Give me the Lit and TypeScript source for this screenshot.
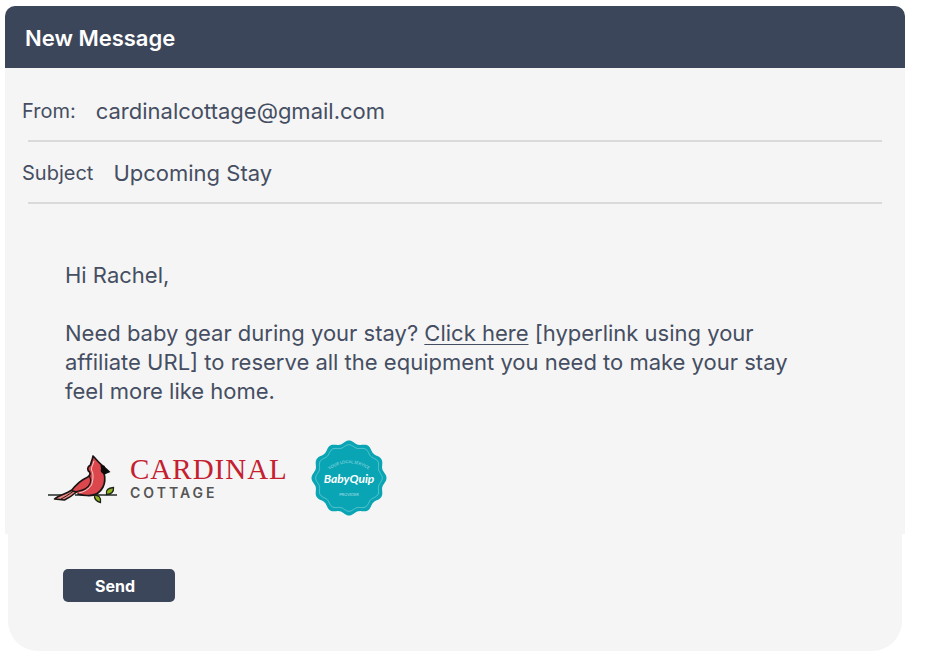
import { LitElement, html, css, svg } from "lit";
import { customElement, state } from "lit/decorators.js";

/* Closed scalloped outline: radius swings between crest and trough. */
function scallop(cx: number, cy: number, radius: number, swing: number, lobes: number): string {
  const steps = 240;
  const points: string[] = [];
  for (let i = 0; i < steps; i++) {
    const a = (i / steps) * Math.PI * 2;
    const r = radius + swing * Math.cos(lobes * a);
    points.push(`${(cx + r * Math.sin(a)).toFixed(2)} ${(cy - r * Math.cos(a)).toFixed(2)}`);
  }
  return `M${points.join("L")}Z`;
}

@customElement("cardinal-logo")
export class CardinalLogo extends LitElement {
  static styles = css`
    :host { display: flex; align-items: center; gap: 12px; }
    .bird { display: block; width: 70px; height: 52px; }
    .name {
      font: 29px/30px "Liberation Serif", serif;
      letter-spacing: 1px;
      color: #c4202f;
    }
    .kind {
      font: 600 14px/18px "Inter", sans-serif;
      letter-spacing: 3px;
      color: #555;
    }
  `;

  render() {
    return html`
      <svg class="bird" viewBox="0 0 70 52" role="img" aria-label="Cardinal on a branch">
        ${svg`
          <path d="M0 43H18M27 43H69" stroke="#222b29" stroke-width="1.3" fill="none"/>
          <path d="M45 4C44.500 8 43 10 42.500 13C39 15 39 18 41.500 20C43 22 41 25 38 26C31 29 27 34 23 39L30 41.500C33 43 40 44 45 43C53 41 57 35 56.500 28C56.500 25 56 23 56 21L61.500 19.500L56 14.500C52 12.500 49 8 45 4Z"
            fill="#dc464d"/>
          <path d="M45 4C44.500 8 43 10 42.500 13C39 15 39 18 41.500 20C43 22 41 25 38 26C31 29 27 34 23 39M45 4C49 8 52 12.500 56 14.500M56 21C57 25 57.500 30 55 35C52 41 46 44 39 43.500C36 43.500 33 43 30 42"
            fill="none" stroke="#1b1415" stroke-width="1.7" stroke-linejoin="round" stroke-linecap="round"/>
          <path d="M52.500 13L56 14L62.500 20L56.500 22.500C54 21 52 20 53 17C53 15.500 52.500 14.500 52.500 13Z" fill="#0d0c0d"/>
          <path d="M41.500 24C44 29 42 34 37 37C33 39 30 39 27 40" fill="none" stroke="#1b1415" stroke-width="1.4"/>
          <path d="M46 9C45 13 43 15 43.500 18C46 22 45 28 43.500 33C41 37 36 40 31 41" fill="none" stroke="#f3d0ca" stroke-width="1"/>
          <path d="M23 38.500C18 42 11 43 6.500 47L16.500 48C21 46 25 43 28.500 40Z" fill="#ea8580" stroke="#1b1415" stroke-width="1.6" stroke-linejoin="round"/>
          <path d="M13 47C17 45 20 43 25 39.500" fill="none" stroke="#1b1415" stroke-width="1"/>
          <path d="M58.500 42.500C57.500 38 60 36 65.500 35.500C66 39.500 63.500 42.500 58.500 42.500ZM46.500 43C50.500 43 53.500 45.500 52.500 50.500C48.500 49.500 46 47.500 46.500 43Z"
            fill="#8fb51d" stroke="#20251a" stroke-width="1.3"/>
        `}
      </svg>
      <div>
        <div class="name">CARDINAL</div>
        <div class="kind">COTTAGE</div>
      </div>
    `;
  }
}

@customElement("babyquip-badge")
export class BabyQuipBadge extends LitElement {
  static styles = css`
    :host { display: block; }
    .badge { display: block; width: 74px; height: 76px; overflow: visible; }
    .brand { font: italic 700 12px "Lato", sans-serif; }
    .motto { font: 4px "Lato", sans-serif; }
  `;

  render() {
    return html`
      <svg class="badge" viewBox="0 0 74 76" role="img" aria-label="BabyQuip">
        ${svg`
          <path d=${scallop(37, 38, 36, 1.5, 12)} fill="#0aa5b5"/>
          <path d=${scallop(37, 38, 32, 1.3, 12)} fill="none" stroke="#6fcbd4" stroke-width="0.8"/>
          <path id="upper" d="M16 31A32 32 0 0 1 58 31" fill="none"/>
          <text class="motto" fill="#a5dfe4" text-anchor="middle"><textPath href="#upper" startOffset="50%">YOUR LOCAL SERVICE</textPath></text>
          <text class="brand" x="37" y="43" fill="#fff" text-anchor="middle">BabyQuip</text>
          <text class="motto" x="37" y="56" fill="#a5dfe4" text-anchor="middle">PROVIDER</text>
        `}
      </svg>
    `;
  }
}

@customElement("app-root")
export class AppRoot extends LitElement {
  @state() private from = "cardinalcottage@gmail.com";
  @state() private subject = "Upcoming Stay";

  static styles = css`
    :host {
      display: block;
      padding: 6px 21px 9px 5px;
      font-family: "Inter", sans-serif;
      color: #454e62;
      background: #fff;
    }
    .header {
      padding: 17px 20px 15px;
      border-radius: 10px 10px 0 0;
      background: #3c465a;
    }
    .title { margin: 0; font-size: 22px; line-height: 30px; font-weight: 600; color: #fff; }
    .sheet { padding-bottom: 18px; background: #f5f5f5; }
    .row { display: flex; align-items: center; gap: 20px; padding: 17px 17px 15px; }
    .row.first { padding-top: 29px; }
    .label { font-size: 20px; line-height: 28px; }
    .field {
      flex: 1;
      min-width: 0;
      height: 28px;
      padding: 0;
      border: 0;
      outline: 0;
      background: none;
      font: inherit;
      font-size: 22px;
      color: inherit;
    }
    .rule { height: 2px; margin: 0 23px; border: 0; background: #dadada; }
    .message { padding: 57px 90px 34px 60px; font-size: 22px; line-height: 29px; }
    .message p { margin: 0 0 29px; }
    .message p:last-child { margin: 0; }
    .link { color: inherit; text-decoration-thickness: 1px; text-underline-offset: 3px; }
    .logos { display: flex; align-items: center; gap: 24px; padding-left: 43px; }
    .footer {
      margin: 0 3px;
      padding: 35px 55px 49px;
      border-radius: 0 0 30px 30px;
      background: #f5f5f5;
    }
    .send {
      display: block;
      width: 112px;
      height: 33px;
      padding: 0 8px 0 0;
      border: 0;
      border-radius: 5px;
      background: #3c465a;
      color: #fff;
      font: 700 16px "Inter", sans-serif;
    }
  `;

  render() {
    return html`
      <form @submit=${(e: Event) => e.preventDefault()}>
        <header class="header"><h1 class="title">New Message</h1></header>
        <div class="sheet">
          <div class="row first">
            <label class="label" for="from">From:</label>
            <input class="field" id="from" type="email" .value=${this.from}
              @input=${(e: Event) => (this.from = (e.target as HTMLInputElement).value)} />
          </div>
          <hr class="rule" />
          <div class="row">
            <label class="label" for="subject">Subject</label>
            <input class="field" id="subject" type="text" .value=${this.subject}
              @input=${(e: Event) => (this.subject = (e.target as HTMLInputElement).value)} />
          </div>
          <hr class="rule" />
          <div class="message">
            <p>Hi Rachel,</p>
            <p>
              Need baby gear during your stay? <a class="link" href="#reserve">Click here</a>
              [hyperlink using your affiliate URL] to reserve all the equipment you need to make your stay feel more like home.
            </p>
          </div>
          <div class="logos">
            <cardinal-logo></cardinal-logo>
            <babyquip-badge></babyquip-badge>
          </div>
        </div>
        <footer class="footer"><button class="send" type="submit">Send</button></footer>
      </form>
    `;
  }
}
